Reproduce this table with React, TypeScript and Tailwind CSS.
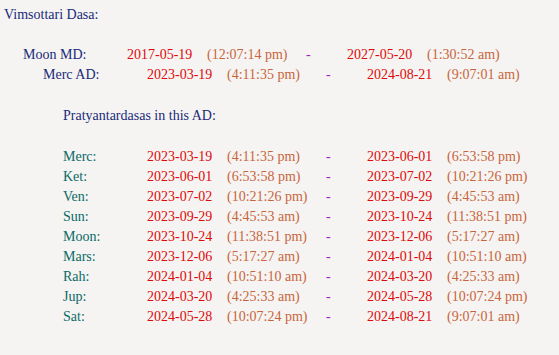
const md = { label: 'Moon MD:', from: '2017-05-19', fromT: '(12:07:14 pm)', to: '2027-05-20', toT: '(1:30:52 am)' }
const ad = { label: 'Merc AD:', from: '2023-03-19', fromT: '(4:11:35 pm)', to: '2024-08-21', toT: '(9:07:01 am)' }

const pds = [
  ['Merc:', '2023-03-19', '(4:11:35 pm)', '2023-06-01', '(6:53:58 pm)'],
  ['Ket:', '2023-06-01', '(6:53:58 pm)', '2023-07-02', '(10:21:26 pm)'],
  ['Ven:', '2023-07-02', '(10:21:26 pm)', '2023-09-29', '(4:45:53 am)'],
  ['Sun:', '2023-09-29', '(4:45:53 am)', '2023-10-24', '(11:38:51 pm)'],
  ['Moon:', '2023-10-24', '(11:38:51 pm)', '2023-12-06', '(5:17:27 am)'],
  ['Mars:', '2023-12-06', '(5:17:27 am)', '2024-01-04', '(10:51:10 am)'],
  ['Rah:', '2024-01-04', '(10:51:10 am)', '2024-03-20', '(4:25:33 am)'],
  ['Jup:', '2024-03-20', '(4:25:33 am)', '2024-05-28', '(10:07:24 pm)'],
  ['Sat:', '2024-05-28', '(10:07:24 pm)', '2024-08-21', '(9:07:01 am)'],
]

function DasaRow({ row, indent }: { row: typeof md; indent: string }) {
  return (
    <div className={`grid grid-cols-[104px_80px_99px_41px_80px_auto] h-5 ${indent}`}>
      <span className="text-[#1a2a7a]">{row.label}</span>
      <span className="text-[#dd0a0a]">{row.from}</span>
      <span className="text-[#c8643c]">{row.fromT}</span>
      <span className="text-[#a020d0]">-</span>
      <span className="text-[#dd0a0a]">{row.to}</span>
      <span className="text-[#c8643c]">{row.toT}</span>
    </div>
  )
}

export default function App() {
  return (
    <div className="w-[559px] h-[355px] overflow-hidden bg-[#f5f4f2] text-[14px] leading-5 font-[family-name:'Liberation_Serif','Times_New_Roman',serif]">
      <div className="-mt-[14px] h-[19px] pl-[305px] text-[#7a5a48]">Current Antardasa</div>
      <div className="h-5 pl-1 text-[#1a2a7a]">Vimsottari Dasa:</div>
      <div className="h-5" />
      <DasaRow row={md} indent="pl-[23px]" />
      <DasaRow row={ad} indent="pl-[43px]" />
      <div className="h-[21px]" />
      <div className="h-5 pl-[63px] text-[#1a2a7a]">Pratyantardasas in this AD:</div>
      <div className="h-[21px]" />
      <div className="flex flex-col">
        {pds.map((p) => (
          <div key={p[0]} className="grid grid-cols-[84px_80px_99px_41px_80px_auto] h-5 pl-[63px]">
            <span className="text-[#0a6a66]">{p[0]}</span>
            <span className="text-[#dd0a0a]">{p[1]}</span>
            <span className="text-[#c8643c]">{p[2]}</span>
            <span className="text-[#a020d0]">-</span>
            <span className="text-[#dd0a0a]">{p[3]}</span>
            <span className="text-[#c8643c]">{p[4]}</span>
          </div>
        ))}
      </div>
    </div>
  )
}
